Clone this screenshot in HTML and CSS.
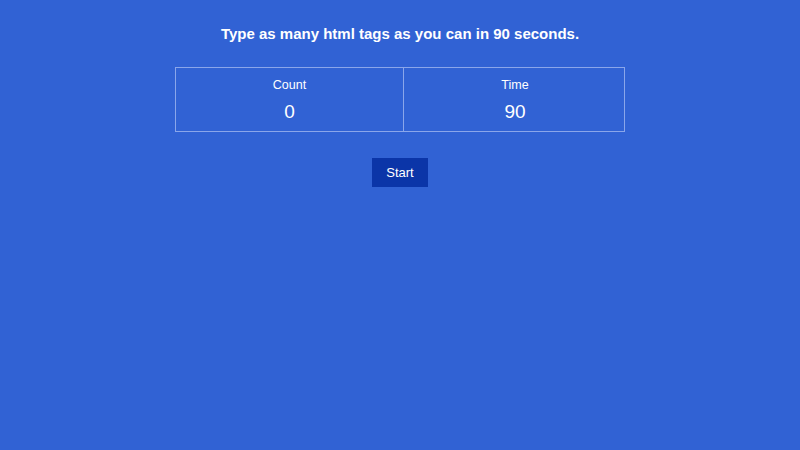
FILE: index.html
```html
<!DOCTYPE html>
<html lang="en">
<head>
<meta charset="utf-8">
<title>Tag Typer</title>
<link rel="stylesheet" href="styles.css">
</head>
<body>
<main class="game">
  <h1 class="prompt">Type as many html tags as you can in 90 seconds.</h1>
  <div class="scoreboard">
    <div class="cell">
      <span class="label">Count</span>
      <span class="value">0</span>
    </div>
    <div class="cell">
      <span class="label">Time</span>
      <span class="value">90</span>
    </div>
  </div>
  <button class="start" type="button">Start</button>
</main>
</body>
</html>
```
FILE: styles.css
```css
html, body {
  margin: 0;
  height: 100%;
}

body {
  background: #3162d4;
  color: #fff;
  font-family: "Liberation Sans", Arial, sans-serif;
}

.game {
  display: flex;
  flex-direction: column;
  align-items: center;
  padding-top: 24px;
}

.prompt {
  margin: 0;
  font-size: 15px;
  font-weight: bold;
  line-height: 20px;
}

.scoreboard {
  margin-top: 23px;
  width: 450px;
  display: grid;
  grid-template-columns: 227px 223px;
  border: 1px solid #8aa6ea;
  box-sizing: border-box;
}

.cell {
  display: flex;
  flex-direction: column;
  align-items: center;
  padding: 9px 0 7px;
}

.cell + .cell {
  border-left: 1px solid #8aa6ea;
}

.label {
  font-size: 12.5px;
  line-height: 17px;
}

.value {
  margin-top: 6px;
  font-size: 19px;
  line-height: 24px;
}

.start {
  margin-top: 26px;
  width: 56px;
  height: 29px;
  padding: 0;
  border: none;
  background: #0b35a8;
  color: #fff;
  font-family: "Liberation Sans", Arial, sans-serif;
  font-size: 13px;
}
```
